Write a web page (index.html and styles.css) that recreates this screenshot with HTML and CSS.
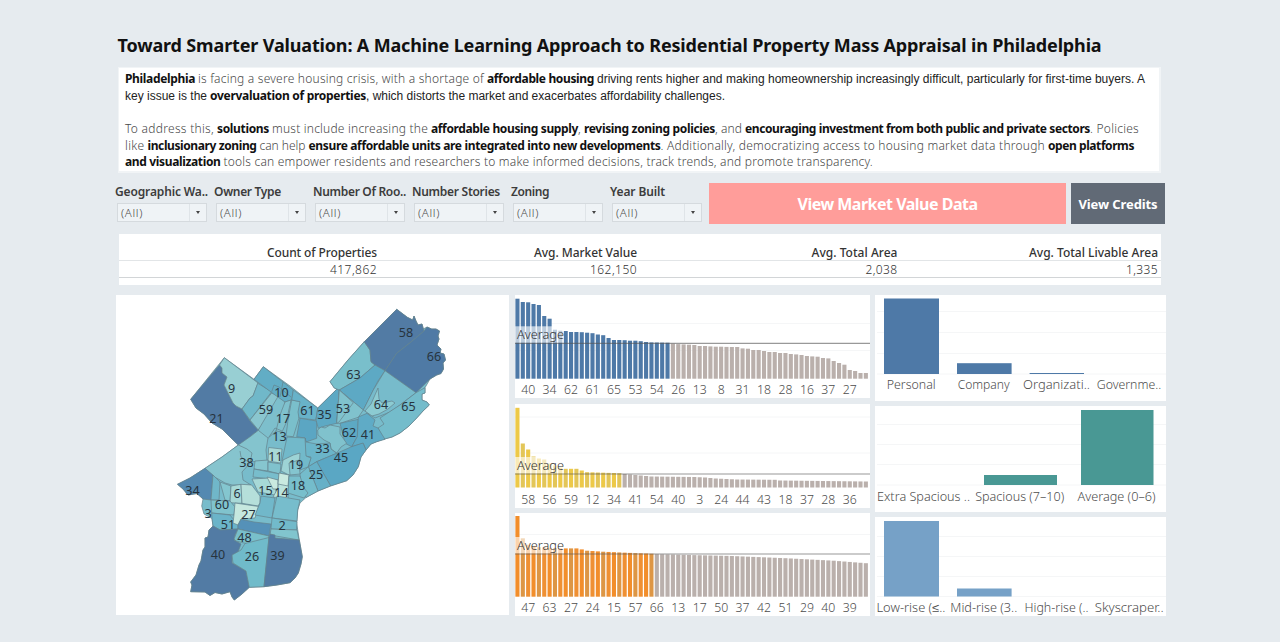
FILE: index.html
```html
<!DOCTYPE html>
<html lang="en">
<head>
<meta charset="utf-8">
<title>Toward Smarter Valuation</title>
<link rel="stylesheet" href="styles.css">
</head>
<body>
<main class="dashboard">
  <h1 class="title"><span data-w="984">Toward Smarter Valuation: A Machine Learning Approach to Residential Property Mass Appraisal in Philadelphia</span></h1>
  <section class="intro">
    <p><b data-w="70">Philadelphia</b> <span data-w="286">is facing a severe housing crisis, with a shortage of</span> <b data-w="107">affordable housing</b> <span class="plain" data-w="548">driving rents higher and making homeownership increasingly difficult, particularly for first-time buyers. A</span></p>
    <p><span class="plain" data-w="82">key issue is the</span> <b data-w="156">overvaluation of properties</b><span class="plain tight" data-w="359">, which distorts the market and exacerbates affordability challenges.</span></p>
    <p class="blank"></p>
    <p><span data-w="89">To address this,</span> <b data-w="52">solutions</b> <span data-w="156">must include increasing the</span> <b data-w="147">affordable housing supply</b><span class="tight" data-w="3">,</span> <b data-w="131">revising zoning policies</b><span class="tight" data-w="27">, and</span> <b data-w="345">encouraging investment from both public and private sectors</b><span class="tight" data-w="49">. Policies</span></p>
    <p><span data-w="19.500">like</span> <b data-w="109">inclusionary zoning</b> <span data-w="46">can help</span> <b data-w="352">ensure affordable units are integrated into new developments</b><span class="tight" data-w="384.500">. Additionally, democratizing access to housing market data through</span> <b data-w="86">open platforms</b></p>
    <p><b data-w="95.500">and visualization</b> <span data-w="649.500">tools can empower residents and researchers to make informed decisions, track trends, and promote transparency.</span></p>
  </section>
  <section class="controls">
    <div class="filters">
      <div class="filter"><label data-w="93">Geographic Wa..</label><div class="select"><span data-w="22">(All)</span><i></i></div></div>
      <div class="filter"><label data-w="67">Owner Type</label><div class="select"><span data-w="22">(All)</span><i></i></div></div>
      <div class="filter"><label data-w="93">Number Of Roo..</label><div class="select"><span data-w="22">(All)</span><i></i></div></div>
      <div class="filter"><label data-w="88">Number Stories</label><div class="select"><span data-w="22">(All)</span><i></i></div></div>
      <div class="filter"><label data-w="38">Zoning</label><div class="select"><span data-w="22">(All)</span><i></i></div></div>
      <div class="filter"><label data-w="55">Year Built</label><div class="select"><span data-w="22">(All)</span><i></i></div></div>
    </div>
    <button class="btn market"><span data-w="180">View Market Value Data</span></button>
    <button class="btn credits"><span data-w="79">View Credits</span></button>
  </section>
  <section class="summary">
    <div class="row head"><div><span data-w="110">Count of Properties</span></div><div><span data-w="103">Avg. Market Value</span></div><div><span data-w="86">Avg. Total Area</span></div><div><span data-w="129">Avg. Total Livable Area</span></div></div>
    <div class="row vals"><div><span data-w="47">417,862</span></div><div><span data-w="47">162,150</span></div><div><span data-w="32">2,038</span></div><div><span data-w="32">1,335</span></div></div>
  </section>
  <section class="charts">
    <svg class="panel" id="map" width="393" height="320" viewBox="116 295 393 320"></svg>
    <div class="stack">
      <svg class="panel" id="value" width="355" height="103" viewBox="515 295 355 103"></svg>
      <svg class="panel" id="area" width="355" height="104" viewBox="515 403.500 355 104"></svg>
      <svg class="panel" id="livable" width="355" height="103" viewBox="515 513 355 103"></svg>
    </div>
    <div class="stack right">
      <svg class="panel" id="owner" width="291" height="106" viewBox="875 295 291 106"></svg>
      <svg class="panel" id="rooms" width="291" height="106" viewBox="875 406 291 106"></svg>
      <svg class="panel" id="stories" width="291" height="98.500" viewBox="875 517 291 98.5"></svg>
    </div>
  </section>
</main>
<script src="charts.js"></script>
</body>
</html>
```

FILE: styles.css
```css
* { box-sizing: border-box; }
body { margin: 0; background: #e6ebef; font-family: "Noto Sans", sans-serif; color: #555; }
.dashboard { width: 1280px; height: 642px; padding: 32px 114px 0 115px; overflow: hidden; }
.title { margin: 0 0 9px 2.500px; height: 26px; font-size: 18px; line-height: 26px; font-weight: 700; color: #111; white-space: nowrap; }
.intro { margin-left: 3px; width: 1043px; height: 106px; padding: 3px 0 0 6px; background: #fff; border: 1px solid #f1f4f6; border-width: 1px 2px 2px 1px; }
.intro p { display: flex; gap: 3px; margin: 0; height: 16.650px; line-height: 16.650px; font-size: 12px; font-weight: 300; white-space: nowrap; color: #484848; }
.intro b { font-weight: 700; color: #111; }
.intro .tight { margin-left: -3px; }
.intro .plain { font-family: "Liberation Sans", Arial, sans-serif; font-weight: 400; color: #222; }
.controls { display: flex; margin-top: 10px; height: 41px; }
.filters { display: grid; grid-template-columns: repeat(6, 99px); width: 594px; }
.filter label { vertical-align: top; height: 20px; line-height: 18px; font-size: 12px; font-weight: 600; color: #3c3c3c; white-space: nowrap; }
.select { display: flex; justify-content: space-between; align-items: center; width: 90px; height: 19px; margin-left: 2px; padding-left: 3px; font-size: 11.500px; font-weight: 300; color: #484848; background: #eff3f6; border: 1px solid #d5dade; }
.select i { display: flex; align-items: center; justify-content: center; width: 17px; height: 17px; border-left: 1px solid #dfe4e8; }
.select i::after { content: ""; border: 2.500px solid transparent; border-top: 3.500px solid #444; border-bottom: 0; }
.filter { line-height: 0; }
.select { line-height: 17px; }
.btn { border: 0; padding: 0; height: 41px; color: #fff; font-family: inherit; font-weight: 700; white-space: nowrap; }
.market { width: 357px; background: #ff9d9a; font-size: 16px; }
.credits { width: 94px; margin-left: 5px; background: #616a76; font-size: 13px; }
.summary { margin: 10px 0 0 4px; width: 1042px; height: 51px; padding-top: 10px; background: #fff; }
.row { display: grid; grid-template-columns: 258px 260px 260.500px 260.500px; height: 17px; text-align: right; font-size: 12px; line-height: 18px; white-space: nowrap; border-bottom: 1px solid #e2e5e7; }
.head { color: #333; font-weight: 500; }
.vals { border-color: #d2d5d7; font-weight: 300; color: #333; }
.charts { display: flex; gap: 6px; margin: 10px 0 0 1px; }
.stack { display: flex; flex-direction: column; gap: 5.500px; }
.right { gap: 5px; margin-left: -1px; }
.panel { display: block; background: #fff; }
.grid { stroke: #f5f6f7; stroke-width: 1; }
.avg { stroke: #555; stroke-opacity: .6; stroke-width: 1.200; }
.veil { fill: #fff; fill-opacity: .62; }
.tick { font-size: 12px; font-weight: 300; fill: #4c4c4c; text-anchor: middle; }
.avg-label { font-size: 12px; font-weight: 300; fill: #333; }
.ward { stroke: #64838d; stroke-width: .7; stroke-linejoin: round; }
.ward-label { font-size: 12.500px; font-weight: 400; fill: #27343e; text-anchor: middle; }
```

FILE: charts.js
```js
// Stretch each label to its design width with letter spacing.
document.querySelectorAll('[data-w]').forEach(function (el) {
  el.style.display = 'inline-block';
  var gap = (el.dataset.w - el.getBoundingClientRect().width) / el.textContent.length;
  if (el.textContent.length > 1) el.style.letterSpacing = gap + 'px';
  el.style.width = el.dataset.w + 'px';
});

function add(id, name, attrs, text) {
  var e = document.createElementNS('http://www.w3.org/2000/svg', name);
  for (var k in attrs) e.setAttribute(k, attrs[k]);
  if (text !== undefined) e.textContent = text;
  document.getElementById(id).appendChild(e);
}

// Heights given at key bars are joined by straight lines: [bar, height].
function series(points) {
  var out = [];
  for (var i = 0; i < points.length - 1; i++) {
    var a = points[i], b = points[i + 1];
    for (var n = a[0]; n < b[0]; n++) out.push(a[1] + (b[1] - a[1]) * (n - a[0]) / (b[0] - a[0]));
  }
  out.push(points[points.length - 1][1]);
  return out;
}

function ranked(id, base, heights, above, colors, avg, labels, tickY, grids) {
  var step = 5.36;
  grids.forEach(function (y) { add(id, 'line', { class: 'grid', x1: 515, x2: 870, y1: y, y2: y }); });
  heights.forEach(function (h, i) {
    add(id, 'rect', { x: 515.4 + i * step, y: base - h, width: 4.1, height: h, fill: i < above ? colors[i % colors.length] : '#bab0ac' });
  });
  add(id, 'rect', { class: 'veil', x: 515, y: avg - 17, width: 49, height: 16.5 });
  add(id, 'line', { class: 'avg', x1: 515, x2: 870, y1: avg, y2: avg });
  add(id, 'text', { class: 'avg-label', x: 517, y: avg - 4.3, textLength: 47, lengthAdjust: 'spacingAndGlyphs' }, 'Average');
  labels.split(' ').forEach(function (t, i) {
    add(id, 'text', { class: 'tick', x: 528.2 + i * step * 4, y: tickY, textLength: t.length * 7, lengthAdjust: 'spacingAndGlyphs' }, t);
  });
}

ranked('value', 378.7, [80, 76.7, 76.4, 74.7, 73.7, 62.7, 60, 49, 48, 47.7, 46.7, 46.7, 46.5, 46, 45.5, 44.2, 43.5, 40.7, 38.7, 38.7, 38.5, 38, 38, 37.5, 36.7, 36.3, 36.2, 36.1, 36, 35, 34.6, 34.3, 34,
  33.7, 32.7, 32.7, 32.3, 32, 32, 31.8, 31.7, 31.7, 30.3, 30, 28.7, 28.7, 27.7, 26.7, 26.7, 25.7, 25.7, 24.7, 24.3, 23.7, 22.7, 22.3, 22, 20.7, 20.3, 17.7, 15.7, 14, 8.7, 7.7, 5.7, 5.7],
  29, ['#4e79a7'], 343.3, '40 34 62 61 65 53 54 26 13 8 31 18 28 16 37 27', 394.3, [323.5, 350.5]);
ranked('area', 487, series([[1, 79.7], [2, 44], [3, 38], [4, 31], [5, 29], [6, 28], [7, 24], [9, 20], [10, 18.7], [12, 18.7], [13, 17], [14, 15.3], [20, 14.3], [21, 13.5], [24, 12], [26, 11], [34, 10.5], [36, 10], [38, 9], [42, 8], [49, 7.7], [50, 7], [66, 6]]),
  20, ['#edc948', '#e3c658'], 473.5, '58 56 59 12 34 41 54 40 3 24 44 43 18 37 28 36', 503.3, [416.5, 452.5]);
ranked('livable', 596.7, series([[1, 80.7], [2, 58.4], [3, 52], [5, 49.5], [9, 48.3], [12, 48.3], [13, 47.3], [14, 46], [17, 45], [22, 43.8], [26, 43], [27, 42.5], [41, 40.7], [51, 38.5], [60, 36], [66, 33.5]]),
  26, ['#f28e2b', '#dd9645', '#ef9033'], 554, '47 63 27 24 15 57 66 13 17 50 37 42 51 29 40 39', 612.3, [534.5]);

// bars: [x, width, top]; labels: [centre, width, text]
function category(id, base, color, bars, labels, tickY, grids) {
  grids.concat(base).forEach(function (y) { add(id, 'line', { class: 'grid', x1: 877, x2: 1166, y1: y, y2: y }); });
  bars.forEach(function (b) { add(id, 'rect', { x: b[0], y: b[2], width: b[1], height: base - b[2], fill: color }); });
  labels.forEach(function (l) {
    add(id, 'text', { class: 'tick', x: l[0], y: tickY, textLength: l[1], lengthAdjust: 'spacingAndGlyphs' }, l[2]);
  });
}
category('owner', 374, '#4e79a7', [[884, 55, 298.5], [957, 54.6, 363.2], [1029.6, 54.4, 373]],
  [[911.2, 49, 'Personal'], [983.7, 52, 'Company'], [1056.5, 67, 'Organizati..'], [1129, 64.5, 'Governme..']], 389.3, [311.5, 332.5, 353.5]);
category('rooms', 485, '#499894', [[984, 73, 475], [1081, 72.5, 410]],
  [[923.5, 93, 'Extra Spacious ..'], [1019.7, 89, 'Spacious (7–10)'], [1116.5, 78, 'Average (0–6)']], 500.7, [424.5, 444.5, 464.5]);
category('stories', 596.5, '#76a1c7', [[884, 55, 521], [957, 54.6, 588.5]],
  [[911, 69, 'Low-rise (≤..'], [983.8, 67, 'Mid-rise (3..'], [1056.5, 64, 'High-rise (..'], [1129.3, 69, 'Skyscraper..']], 612.3, [536.5, 556.5, 576.5]);

var city = '224.3,357.7 190.7,399.3 196,408 204,414 212,423 222,429 230,437 238.3,445 222,457 205,468.3 190,478 177.5,484.3 183,489 188,495 197,493.5 203,499 201.7,506 204,514 212,518.5 213,526 209,530 208,537 205,538 205,547 203,550 201,561 199,565 196,575 190.7,582 192,585 190.7,591.7 205,592 210,595.5 215,592.5 222,594 230,591.7 232,597 234.3,600 242,594 249.3,587.3 264,586.7 277,585 290,582.7 295,578 298.3,573 301,564 302.3,556.7 299.3,540 296.7,523.3 297.7,510 300,503 306,497.5 318,491 330,486 346.7,480.7 353,475 358.3,466.7 361,457 366,450 371,444 376.7,441.7 383.3,439.3 392,437 400,433 409,426 416.7,418 423,411 429.3,405 427,402 422,400 422,394 425,393 425,387.7 430,379 436.7,375 441,373.5 443.5,369 443,363 445.5,360 444,354 440,353 441,349 437,345 439,339 438,336 439.5,331 436,329 431.7,329 427,327 423.3,329 422,324 418,325 416,321 414,316 412.7,320 407.3,317.3 396.7,309.3 364.3,341.7 348,360 330,381.7 334.3,388 336.7,389.3 317.8,408 290,386 263.3,366.7 254,379.3';
var wards = [
  ['#78bccb', city],
  ['#527ba4', '219.5,365 190.7,399.3 196,408 204,414 212,423 222,429 230,437 238.3,445 247,443 251,436 258.3,430.3 250,421 242,409 236,406 233,403 228,393 224,385 227,377 222,373 222,368'],
  ['#98cfd3', '224.3,357.7 258,383 253,396 250,398 242,409 236,406 233,403 228,393 224,385 227,377 222,373 222,368 219.5,365'],
  ['#70b8c9', '257.7,383.3 271.7,391.7 250,420 242,409 250,398 253,396'],
  ['#8ac6cf', '271.7,393 279,396 278.3,402 258.3,430 250,420'],
  ['#7dbfcc', '278.3,396 285,402 283,420 276,431 266,440 258.3,430'],
  ['#62adc5', '263.3,366.7 293.3,390 291.7,400 285,402 275,395 254,379.3'],
  ['#7fc1cd', '285,402 291,400 286,423 282,432 276,431 280,415'],
  ['#7abfcb', '291.7,400 301,401.7 299,418 293.3,436.7 286,436 288,420'],
  ['#68b2c9', '293.3,390 317.8,408 315.7,420 299,418 298,412 300,401.7 291.7,400'],
  ['#5ba6c3', '300,418.3 316.7,421 316.7,438.3 306,442 305,438 296.7,436.7'],
  ['#5da9c4', '336.7,389.3 317.8,408 316,420 318.3,428.3 325,426 336.7,423.3 339.3,390'],
  ['#79bfcb', '364.3,341.7 370,350 371,361.7 375,365 360,378 339.3,390 334.3,388 330,381.7 348,360'],
  ['#527ba4', '396.7,309.3 364.3,341.7 370,350 371,361.7 375,365 385,370.7 396.7,353.3 411,342 424,331 422,324 418,325 416,321 414,316 412.7,320 407.3,317.3'],
  ['#4f7aa5', '424,331 411,342 396.7,353.3 385,370.7 416,392.7 430,379 436.7,375 441,373.5 443.5,369 443,363 445.5,360 444,354 440,353 441,349 437,345 439,339 438,336 439.5,331 436,329 431.7,329 427,327'],
  ['#5da9c4', '375,365 385,370.7 378,381 373.3,390 363.3,410 339.3,390 360,378'],
  ['#80c2cd', '339.3,390 363.3,410 358.3,417.3 340,423.3 336.7,423.3'],
  ['#80c2cd', '339.3,390 353.3,402.7 339,422 336.7,423.3'],
  ['#77bbcb', '385,370.7 416,392.7 400,405 390,412 375,418 363.3,410 373.3,390'],
  ['#8ccbd2', '378,388 379,399 382,403 392,401 395,403 388,409 379,414 372,416 365,411 371,404'],
  ['#74bccb', '416,392.7 425,387.7 425,393 422,394 422,400 427,402 429.3,405 423,411 416.7,418 409,426 400,433 392,437 383.3,439.3 378,428 384,424 380,418 400,405'],
  ['#5da9c4', '340,423.3 358.3,419.3 357.3,436.7 351.7,446.7 345,443.3'],
  ['#5fabc6', '358.3,417 367,413.3 375,420 373,426 378,428 385,439.3 376.7,441.7 371,444 366,450 363.3,443.3 351.7,446.7 357.3,436.7'],
  ['#80c2cd', '317.7,430 321,427 325,428 330,425 340,427 340,434 346.7,443.3 341,447 336.7,453 331,449 330,443 324,440 318,435'],
  ['#6bb5c9', '305,438 306,442 316.7,444 330,443 331,449 336.7,453.3 316.7,461.7 308.3,467 311,457 305,456'],
  ['#5aa7c4', '316.7,461.7 336.7,453.3 351.7,446.7 363,443 366,450 361,457 358.3,466.7 353,475 346.7,480.7 330.7,486'],
  ['#66b0c7', '308.3,466.7 316.7,461.7 330.7,486 318,491'],
  ['#74bccb', '308.3,466.7 300,474 301,485 306,497.5 318,491'],
  ['#72b9ca', '287,437 305,438 306,456 311,458 308,467 300,470 299,454 282,461'],
  ['#84c4ce', '258.3,430.3 268,438 266,450 267,461 247,462 241,451 238.3,445 251,436'],
  ['#86c4ce', '238.3,445 247,449 252,453 250,463 242,472 243,480 251,485 232,485 225,483 213,476 205,468.3 222,457'],
  ['#5489b1', '205,468.3 213,475 211,500 203,499 197,493.5 188,495 183,489 177.5,484.3 190,478'],
  ['#70b7c9', '213,475 220,482 219,500 211,500'],
  ['#84c6cf', '220,482 231,486 230,501 225,500'],
  ['#a8d9d7', '231,486 241,484.300 242,503.3 230,502.7'],
  ['#b5dfda', '241,484.3 251.7,485 260,496 260,503 258,506 242,503.3'],
  ['#80c3cd', '211,500 230,501 235,507 234,515 211.7,513'],
  ['#6bb4c9', '211.7,513 230,515 238,525 238,529 220,530 213,526 212,518.5'],
  ['#c6e8df', '235,503 258.5,506.5 255,518 241,519 238,525 233,523 234,515'],
  ['#a8d9d7', '268.7,447.5 282,449 280.7,463 268,461'],
  ['#86c6cf', '255,461 268,460 268,471 254,469'],
  ['#80c2cd', '268,462 281,464 280,474 268,471'],
  ['#78bdcc', '254,469 280,474 279,480 253,477'],
  ['#9dd3d5', '293.3,455 300,453 299,472 289,475 281,471 283,460'],
  ['#84c5cf', '289,463 299,460 300,474 290,475'],
  ['#a7d9d7', '252,479 269,478 277,488 275,495 258,492'],
  ['#caeae0', '267,477 278,480 278,489 273,489'],
  ['#bce3dc', '279,473 289,475 288,499 273,497 278,488'],
  ['#caeae0', '279,473 289,475 288,486 278,484'],
  ['#78bfcc', '289,476 300,476 304,488 308,493 304,498 288,493'],
  ['#71b8ca', '261,496 275,498 272,518 255,515 260,503'],
  ['#77bdcc', '277,496 300,500 297.7,510 297,521 272,518'],
  ['#72baca', '272,518 297,521.7 296.5,530 271,529'],
  ['#81c5ce', '271,529 297,530 299,540 270,535'],
  ['#527ba4', '213,526 220,530 238,529 235,535 234,540 241,544 238,552 232,556 232,563 246,571 249.3,587.3 242,594 234.3,600 232,597 230,591.7 222,594 215,592.5 210,595.5 205,592 190.7,591.7 192,585 190.7,582 196,575 199,565 201,561 203,550 205,547 205,538 208,537 209,530'],
  ['#5591b8', '241,519.3 254,522 271,524 269,536 238,529 238,525'],
  ['#79c0cb', '238,529 269,536 268.5,539 248,544 236,541 234,539'],
  ['#70bbca', '245,543.5 269,537.5 264,586.7 249.3,587.3 246,571 233,563 232,555 241,550'],
  ['#527ba4', '269,537 270,534 275,535 275,538 299.3,540 302.3,556.7 301,564 298.3,573 295,578 290,582.7 277,585 264,586.7']
];
wards.forEach(function (w) { add('map', 'polygon', { class: 'ward', fill: w[0], points: w[1] }); });
['271.7,391.7 274,385 279,387 291,397', '283,382 280,397', '240,451 241,457 250,463', '269,437 275,428 282,431'].forEach(function (p) {
  add('map', 'polyline', { class: 'ward', fill: 'none', points: p });
});
[[58, 406, 332.5], [66, 434, 357], [63, 353.5, 374.5], [9, 231.5, 388.5], [10, 281.5, 392.5], [59, 266, 410], [21, 216.5, 419], [17, 283, 419], [61, 307.5, 411], [35, 324.5, 415], [53, 343, 409], [64, 381, 405], [65, 408.5, 407], [62, 349, 433], [41, 368, 435], [13, 279.5, 437], [33, 322.500, 449], [45, 341, 458], [11, 275.5, 457], [38, 246.5, 463], [19, 296, 465], [25, 316, 475], [18, 298, 486], [34, 192.5, 491], [6, 237, 494], [15, 265.5, 491], [14, 281.5, 493], [60, 222, 505], [3, 208, 514], [27, 248.5, 515], [51, 228, 525], [2, 282, 525.5], [48, 244.5, 538], [40, 218, 555], [26, 252, 556.5], [39, 277.500, 556]].forEach(function (l) {
  var t = String(l[0]);
  add('map', 'text', { class: 'ward-label', x: l[1], y: l[2] + 4.3, textLength: t.length * 7.2, lengthAdjust: 'spacingAndGlyphs' }, t);
});
```
